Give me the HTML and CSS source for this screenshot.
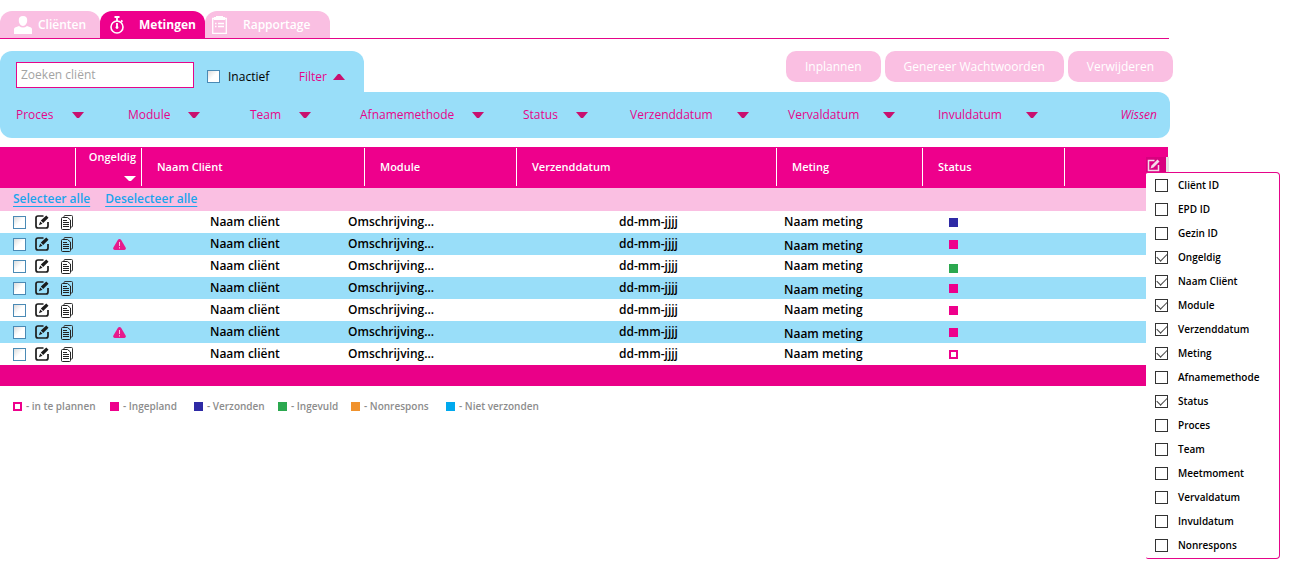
FILE: index.html
```html
<!DOCTYPE html>
<html lang="nl">
<head>
<meta charset="utf-8">
<title>Metingen</title>
<link rel="stylesheet" href="styles.css">
</head>
<body>
<svg class="defs" aria-hidden="true">
  <symbol id="edit" viewBox="0 0 14 14"><path d="M8.500 1H3Q1 1 1 3v8q0 2 2 2h8q2 0 2-2V7" fill="none" stroke="#1c1c1c" stroke-width="1.700"/><path d="M11.300.500l2.200 2.200L8.200 8 5.800 5.600zM5.200 6.400l2.300 2.300-3.600 1.500z" fill="#1c1c1c"/></symbol>
  <symbol id="copy" viewBox="0 0 12 15"><path d="M3 2.500V1.500q0-1 1-1h6.500q1 0 1 1V11q0 1-1 1H10" fill="none" stroke="#333"/><path d="M1.500 2.500H6.500l3 2.500v8.500q0 1-1 1H1.500q-1 0-1-1v-10q0-1 1-1z" fill="none" stroke="#222"/><path d="M2 5.500h4M2 7.500h6M2 9.500h6M2 11.500h6" stroke="#222"/></symbol>
  <symbol id="warn" viewBox="0 0 13 11"><path d="M6.500 0Q7.500 0 8.200 1.100L12.600 8.500Q13.400 10.800 11.300 11H1.700Q-.400 10.800.400 8.500L4.800 1.100Q5.500 0 6.500 0z" fill="#e61a8d"/><path d="M6.500 3v4M6.500 8.200v1.300" stroke="#fbbde0" stroke-width="1"/></symbol>
  <symbol id="down" viewBox="0 0 12 6"><path d="M0 0h12L7 6H5z" fill="currentColor"/></symbol>
</svg>

<div class="page">
  <nav class="tabs">
    <a class="tab tab-clients" href="#"><svg width="18" height="18" viewBox="0 0 18 18"><path d="M9 0c3 0 4.500 2 4.200 4.800C13 7.500 11.500 10 9 10S5 7.500 4.800 4.800C4.500 2 6 0 9 0zM5 10q4 3 8 0l4 1.500q1 .500 1 2V18H0v-4.500q0-1.500 1-2z" fill="#fff"/></svg>Cliënten</a>
    <a class="tab tab-measure active" href="#" aria-current="page"><svg width="14" height="18" viewBox="0 0 14 18"><circle cx="7" cy="11" r="6" fill="none" stroke="#fff" stroke-width="1.600"/><path d="M4.500 1h5M7 1v4M11 4.500l1.500 1.200M7 7v4.500" stroke="#fff" stroke-width="1.800"/><circle cx="7" cy="11.500" r="1.400" fill="#fff"/></svg>Metingen</a>
    <a class="tab tab-report" href="#"><svg width="15" height="18" viewBox="0 0 15 18"><path d="M.700 2.500h13.600v14.800H.700z" fill="none" stroke="#fff" stroke-width="1.300"/><path d="M4 0h7v1h2v3H2V1h2z" fill="#fff"/><path d="M3 7.500h1.500M6 7.500h6M3 10.500h1.500M6 10.500h6" stroke="#fff" stroke-width="1.400"/></svg>Rapportage</a>
  </nav>

  <header class="toolbar">
    <form class="search">
      <input class="search-box" type="text" placeholder="Zoeken cliënt" aria-label="Zoeken cliënt">
      <label class="inactive"><input class="tick" type="checkbox">Inactief</label>
      <button class="link-btn filter-toggle" type="button">Filter <svg class="arrow up" width="12" height="6"><use href="#down"/></svg></button>
    </form>
    <div class="actions">
      <button class="action" type="button">Inplannen</button>
      <button class="action" type="button">Genereer Wachtwoorden</button>
      <button class="action" type="button">Verwijderen</button>
    </div>
  </header>

  <div class="filters">
    <button class="link-btn" type="button">Proces<svg class="arrow" width="12" height="6"><use href="#down"/></svg></button>
    <button class="link-btn" type="button">Module<svg class="arrow" width="12" height="6"><use href="#down"/></svg></button>
    <button class="link-btn" type="button">Team<svg class="arrow" width="12" height="6"><use href="#down"/></svg></button>
    <button class="link-btn" type="button">Afnamemethode<svg class="arrow" width="12" height="6"><use href="#down"/></svg></button>
    <button class="link-btn" type="button">Status<svg class="arrow" width="12" height="6"><use href="#down"/></svg></button>
    <button class="link-btn wide" type="button">Verzenddatum<svg class="arrow" width="12" height="6"><use href="#down"/></svg></button>
    <button class="link-btn wide" type="button">Vervaldatum<svg class="arrow" width="12" height="6"><use href="#down"/></svg></button>
    <button class="link-btn wide" type="button">Invuldatum<svg class="arrow" width="12" height="6"><use href="#down"/></svg></button>
    <button class="link-btn clear" type="button">Wissen</button>
  </div>

  <main class="list">
    <table class="grid">
      <colgroup><col class="c-tools"><col class="c-invalid"><col class="c-name"><col class="c-overlap"><col class="c-module"><col class="c-date"><col class="c-measure"><col class="c-status"><col></colgroup>
      <thead>
        <tr>
          <th></th>
          <th><div class="head head-sort">Ongeldig<svg width="12" height="5" viewBox="0 0 12 6" preserveAspectRatio="none"><path d="M0 0h12L7 6H5z" fill="#fff"/></svg></div></th>
          <th colspan="2"><div class="head">Naam Cliënt</div></th>
          <th><div class="head">Module</div></th>
          <th><div class="head">Verzenddatum</div></th>
          <th><div class="head">Meting</div></th>
          <th><div class="head">Status</div></th>
          <th><div class="head"></div></th>
        </tr>
        <tr class="select-row"><td colspan="9"><a href="#">Selecteer alle</a><a href="#">Deselecteer alle</a></td></tr>
      </thead>
      <tbody>
        <tr><td><div class="tools"><input class="tick" type="checkbox" aria-label="Selecteer"><svg width="14" height="14"><use href="#edit"/></svg><svg width="12" height="15"><use href="#copy"/></svg></div></td><td></td><td class="name">Naam cliënt</td><td colspan="2">Omschrijving...</td><td class="date">dd-mm-jjjj</td><td class="measure">Naam meting</td><td class="state"><i class="dot sent"></i></td><td></td></tr>
        <tr><td><div class="tools"><input class="tick" type="checkbox" aria-label="Selecteer"><svg width="14" height="14"><use href="#edit"/></svg><svg width="12" height="15"><use href="#copy"/></svg></div></td><td class="warn"><svg width="13" height="11"><use href="#warn"/></svg></td><td class="name">Naam cliënt</td><td colspan="2">Omschrijving...</td><td class="date">dd-mm-jjjj</td><td class="measure low">Naam meting</td><td class="state"><i class="dot planned"></i></td><td></td></tr>
        <tr><td><div class="tools"><input class="tick" type="checkbox" aria-label="Selecteer"><svg width="14" height="14"><use href="#edit"/></svg><svg width="12" height="15"><use href="#copy"/></svg></div></td><td></td><td class="name">Naam cliënt</td><td colspan="2">Omschrijving...</td><td class="date">dd-mm-jjjj</td><td class="measure">Naam meting</td><td class="state low"><i class="dot filled"></i></td><td></td></tr>
        <tr><td><div class="tools"><input class="tick" type="checkbox" aria-label="Selecteer"><svg width="14" height="14"><use href="#edit"/></svg><svg width="12" height="15"><use href="#copy"/></svg></div></td><td></td><td class="name">Naam cliënt</td><td colspan="2">Omschrijving...</td><td class="date">dd-mm-jjjj</td><td class="measure low">Naam meting</td><td class="state"><i class="dot planned"></i></td><td></td></tr>
        <tr><td><div class="tools"><input class="tick" type="checkbox" aria-label="Selecteer"><svg width="14" height="14"><use href="#edit"/></svg><svg width="12" height="15"><use href="#copy"/></svg></div></td><td></td><td class="name">Naam cliënt</td><td colspan="2">Omschrijving...</td><td class="date">dd-mm-jjjj</td><td class="measure">Naam meting</td><td class="state"><i class="dot planned"></i></td><td></td></tr>
        <tr><td><div class="tools"><input class="tick" type="checkbox" aria-label="Selecteer"><svg width="14" height="14"><use href="#edit"/></svg><svg width="12" height="15"><use href="#copy"/></svg></div></td><td class="warn"><svg width="13" height="11"><use href="#warn"/></svg></td><td class="name">Naam cliënt</td><td colspan="2">Omschrijving...</td><td class="date">dd-mm-jjjj</td><td class="measure low">Naam meting</td><td class="state"><i class="dot planned"></i></td><td></td></tr>
        <tr><td><div class="tools"><input class="tick" type="checkbox" aria-label="Selecteer"><svg width="14" height="14"><use href="#edit"/></svg><svg width="12" height="15"><use href="#copy"/></svg></div></td><td></td><td class="name">Naam cliënt</td><td colspan="2">Omschrijving...</td><td class="date">dd-mm-jjjj</td><td class="measure">Naam meting</td><td class="state"><i class="dot open"></i></td><td></td></tr>
      </tbody>
      <tfoot><tr><td colspan="9"></td></tr></tfoot>
    </table>

    <div class="picker">
      <button class="picker-btn" type="button" aria-label="Kolommen kiezen"><svg width="13" height="13" viewBox="0 0 13 13"><path d="M7.500 1.500h-6v10h10V6" fill="none" stroke="#f3dbe9" stroke-width="1.500"/><path d="M10.500.500l2 2-6 6-3 1 1-3z" fill="#f3dbe9"/></svg></button>
      <div class="panel">
        <label><input type="checkbox">Cliënt ID</label>
        <label><input type="checkbox">EPD ID</label>
        <label><input type="checkbox">Gezin ID</label>
        <label><input type="checkbox" checked>Ongeldig</label>
        <label><input type="checkbox" checked>Naam Cliënt</label>
        <label><input type="checkbox" checked>Module</label>
        <label><input type="checkbox" checked>Verzenddatum</label>
        <label><input type="checkbox" checked>Meting</label>
        <label><input type="checkbox">Afnamemethode</label>
        <label><input type="checkbox" checked>Status</label>
        <label><input type="checkbox">Proces</label>
        <label><input type="checkbox">Team</label>
        <label><input type="checkbox">Meetmoment</label>
        <label><input type="checkbox">Vervaldatum</label>
        <label><input type="checkbox">Invuldatum</label>
        <label><input type="checkbox">Nonrespons</label>
      </div>
    </div>
  </main>

  <ul class="legend">
    <li><i class="dot open"></i>- in te plannen</li>
    <li><i class="dot planned"></i>- Ingepland</li>
    <li><i class="dot sent"></i>- Verzonden</li>
    <li><i class="dot filled"></i>- Ingevuld</li>
    <li><i class="dot none"></i>- Nonrespons</li>
    <li><i class="dot unsent"></i>- Niet verzonden</li>
  </ul>
</div>
</body>
</html>
```
FILE: styles.css
```css
* { box-sizing: border-box; }

:root {
  --pink: #ee008c;
  --line: #e5058a;
  --soft: #fabfe2;
  --blue: #99def9;
}

body {
  min-height: 100vh;
  margin: 0;
  background: #fff;
  color: #000;
  font: 500 12px/16px "Trebuchet MS", "Open Sans", "Noto Sans", sans-serif;
}

button, input { font: inherit; }
button { border: 0; padding: 0; background: none; cursor: pointer; }
svg { display: block; flex: none; }
.defs { width: 0; height: 0; position: absolute; }

.page { padding: 11px 126px 0 0; }

/* tabs */
.tabs { display: flex; border-bottom: 1px solid var(--line); }
.tab {
  display: flex;
  align-items: center;
  height: 27px;
  border-radius: 12px 12px 0 0;
  background: var(--soft);
  color: #fff;
  font-weight: 600;
  text-decoration: none;
}
.tab.active { background: var(--pink); font-weight: 700; }
.tab-clients { width: 100px; padding-left: 14px; gap: 6px; }
.tab-measure { width: 105px; padding-left: 10px; gap: 15px; }
.tab-report { width: 125px; padding-left: 7px; gap: 16px; }

/* search and actions */
.toolbar {
  display: flex;
  justify-content: space-between;
  align-items: flex-start;
  margin: 12px -4px 0 0;
}
.search {
  display: flex;
  align-items: center;
  width: 364px;
  height: 41px;
  padding: 6px 16px 0;
  border-radius: 12px 12px 0 0;
  background: var(--blue);
}
.search-box {
  width: 178px;
  height: 26px;
  padding: 0 4px;
  border: 1px solid var(--line);
  background: #fff;
}
.search-box::placeholder { color: #a3a3a3; opacity: 1; }
.inactive { display: flex; align-items: center; gap: 8px; margin: 4px 0 0 13px; }

.tick {
  appearance: none;
  width: 13px;
  height: 13px;
  margin: 0;
  border: 1px solid #4a8ab5;
  background: linear-gradient(135deg, #dcdcdc, #fff 50%);
}

.link-btn { display: flex; align-items: center; gap: 18px; color: var(--line); }
.link-btn.wide { gap: 24px; }
.arrow { color: #c8106f; }
.arrow.up { transform: scaleY(-1); }
.filter-toggle { gap: 6px; margin: 4px 3px 0 auto; }

.actions { display: flex; gap: 4px; }
.action {
  height: 31px;
  padding: 0 19px;
  border-radius: 10px;
  background: var(--soft);
  color: #fff;
}

/* column filters */
.filters {
  display: grid;
  grid-template-columns: 112px 122px 110px 163px 107px 158px 150px 1fr auto;
  align-items: center;
  height: 46px;
  margin-right: -1px;
  padding: 0 13px 0 16px;
  border-radius: 0 12px 12px 12px;
  background: var(--blue);
}
.clear { font-style: italic; }

/* table */
.list { position: relative; margin: 9px 1px 0 0; }
.grid { width: 100%; table-layout: fixed; border-collapse: collapse; }
.c-tools { width: 75px; }
.c-invalid { width: 66px; }
.c-name { width: 207px; }
.c-overlap { width: 16px; }
.c-module { width: 152px; }
.c-date { width: 260px; }
.c-measure { width: 146px; }
.c-status { width: 142px; }
.grid th, .grid td { padding: 0; text-align: left; }
.grid th {
  height: 41px;
  background: var(--pink);
  color: #fff;
  font-size: 11px;
  font-weight: 600;
  line-height: 14px;
  vertical-align: top;
}
.head {
  display: flex;
  align-items: center;
  height: 38px;
  margin-top: 1px;
  padding-left: 15px;
  border-left: 1px solid #fff;
}
.head-sort {
  flex-direction: column;
  align-items: flex-end;
  justify-content: space-between;
  padding: 2px 5px 5px 0;
}
.grid .select-row td {
  height: 23px;
  padding: 0 0 2px 13px;
  background: var(--soft);
  font-weight: 600;
}
.select-row a { margin-right: 15px; color: #1ba4ec; text-underline-offset: 3px; }
.grid tbody td { height: 22px; line-height: 16px; font-weight: 600; }
.grid tbody tr:nth-child(even) { background: var(--blue); }
.tools { display: flex; align-items: center; padding-left: 13px; }
.tools svg { margin-left: 9px; }
.tools svg + svg { margin-left: 12px; }
.grid .warn { padding-left: 38px; }
.grid .name { padding-left: 69px; }
.grid .date { padding-left: 103px; }
.grid .measure { padding-left: 8px; }
.grid .state { padding-left: 27px; }
.grid .low { padding-top: 4px; }
.grid tfoot td { height: 21px; background: #ea0088; }

.dot { display: block; flex: none; width: 9px; height: 9px; }
.open { border: 2px solid var(--pink); background: #fff; }
.planned { background: var(--pink); }
.sent { background: #2e2aa5; }
.filled { background: #2ba84f; }
.none { background: #f0922d; }
.unsent { background: #00a9ee; }

/* column picker, over the table's right edge */
.picker { position: absolute; top: 10px; left: calc(100% - 22px); width: 134px; }
.picker-btn {
  display: block;
  width: 23px;
  height: 15px;
  padding: 2px 0 0 1px;
  border-right: 3px solid #e4e4e4;
  background: #d8007f;
}
.panel {
  padding-bottom: 1px;
  border: 1px solid var(--line);
  border-left: 0;
  border-radius: 2px 4px 4px 2px;
  background: #fff;
}
.panel label {
  display: flex;
  align-items: center;
  gap: 10px;
  height: 24px;
  padding-left: 9px;
  font-size: 10px;
  font-weight: 600;
}
.panel input {
  appearance: none;
  display: grid;
  place-items: center;
  width: 13px;
  height: 13px;
  margin: 0;
  border: 1px solid #333;
}
.panel input:checked::before {
  content: "";
  width: 9px;
  height: 5px;
  margin-top: -3px;
  border: solid #444;
  border-width: 0 0 1px 1px;
  transform: rotate(-45deg);
}

.legend {
  display: grid;
  grid-template-columns: 97px 84px 84px 73px 95px auto;
  margin: 12px 0 0;
  padding: 0 0 0 13px;
  list-style: none;
  color: #8c8c8c;
  font-size: 10px;
  font-weight: 600;
}
.legend li { display: flex; align-items: center; gap: 4px; }
```
